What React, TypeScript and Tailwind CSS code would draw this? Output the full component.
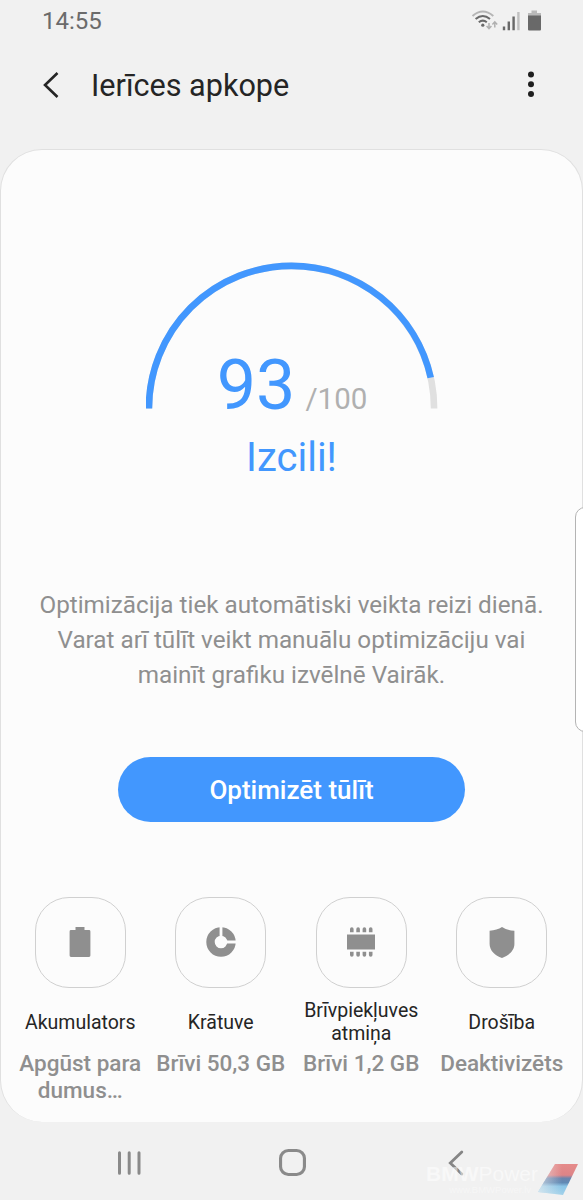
import type { ReactNode } from 'react';

const SCORE = 93;
const RADIUS = 142.6;

const tiles: { label: string; status: string; icon: ReactNode }[] = [
  { label: 'Akumulators', status: 'Apgūst para dumus…', icon: <BatteryIcon /> },
  { label: 'Krātuve', status: 'Brīvi 50,3 GB', icon: <StorageIcon /> },
  { label: 'Brīvpiekļuves atmiņa', status: 'Brīvi 1,2 GB', icon: <MemoryIcon /> },
  { label: 'Drošība', status: 'Deaktivizēts', icon: <ShieldIcon /> },
];

export default function App() {
  return (
    <div className="relative flex h-[1200px] w-[583px] flex-col overflow-hidden bg-[#f1f1f1] font-['Roboto',sans-serif]">
      <StatusBar />

      <header className="flex h-[88px] shrink-0 items-center pr-[46px] pl-[43px]">
        <svg className="h-[26px] w-4 -translate-y-px" viewBox="0 0 16 26" fill="none" stroke="#252525" strokeWidth="2.6">
          <path d="M14.5 1 L2 13 L14.5 25" />
        </svg>
        <h1 className="ml-[32px] text-[30.6px] whitespace-nowrap text-[#252525]">Ierīces apkope</h1>
        <svg className="ml-auto h-[28px] w-[12px] -translate-y-[2px]" viewBox="0 0 12 28" fill="#1f1f1f">
          <circle cx="6" cy="4.4" r="3" />
          <circle cx="6" cy="14.2" r="3" />
          <circle cx="6" cy="24" r="3" />
        </svg>
      </header>

      <main className="mt-[19px] flex h-[973px] shrink-0 flex-col items-center rounded-[42px] border border-b-0 border-[#e0e0e0] bg-[#fcfcfc]">
        <Gauge />
        <p className="mt-[26px] text-[40px] leading-[46px] text-[#4297fe]">Izcili!</p>

        <p className="mt-[107px] text-center text-[24.25px] leading-[35px] whitespace-nowrap text-[#8f8f8f]">
          Optimizācija tiek automātiski veikta reizi dienā.
          <br />
          Varat arī tūlīt veikt manuālu optimizāciju vai
          <br />
          mainīt grafiku izvēlnē Vairāk.
        </p>

        <button
          type="button"
          className="mt-[64px] h-[65px] w-[347px] shrink-0 rounded-full bg-[#4297fe] pt-px text-[26px] font-medium text-white"
        >
          Optimizēt tūlīt
        </button>

        <div className="mt-[75px] grid w-full grid-cols-4 pr-[10px] pl-[9px]">
          {tiles.map((tile) => (
            <div key={tile.label} className="flex flex-col items-center text-center">
              <div className="flex h-[91px] w-[91px] items-center justify-center rounded-[34px] border-[1.5px] border-[#d0d0d0] pb-px">
                {tile.icon}
              </div>
              <div className="mt-[11px] flex h-[46px] w-[124px] items-center justify-center text-[19.5px] leading-[23px] text-[#252525]">
                {tile.label}
              </div>
              <div className="mt-[5px] w-[134px] text-[22.5px] leading-[26.5px] font-medium text-[#8f8f8f]">
                {tile.status}
              </div>
            </div>
          ))}
        </div>
      </main>

      <NavBar />

      {/* Edge panel handle */}
      <div className="absolute top-[507px] -right-3 h-[225px] w-5 rounded-[10px] border border-[#b4b4b4] bg-white" />

      <Watermark />
    </div>
  );
}

function StatusBar() {
  return (
    <div className="flex h-[42px] shrink-0 items-center justify-between pr-[40px] pl-[42px]">
      <span className="text-[24px] leading-[42px] text-[#6b6b6b]">14:55</span>
      <svg className="h-[24px] w-[72px]" viewBox="471 8.5 72 24" fill="none">
        <g strokeWidth="2">
          <path d="M472.5 15.5 Q482.8 6.5 493.3 15.5" stroke="#b5b5b5" />
          <path d="M475.6 18.6 Q482.8 12.4 490 18.6" stroke="#696969" />
          <path d="M478.8 21.8 Q482.8 18.4 486.8 21.8" stroke="#696969" />
        </g>
        <circle cx="482.8" cy="24.7" r="1.6" fill="#696969" />
        <g stroke="#b0b0b0" strokeWidth="1.5">
          <path d="M489 22.5 V28 M486.6 25.6 L489 28.2 L491.4 25.6" />
          <path d="M494.8 27 V21.5 M492.4 23.9 L494.8 21.3 L497.2 23.9" />
        </g>
        <g strokeWidth="2.4">
          <path d="M504 26 V29.7 M508.8 21 V29.7 M513.6 16 V29.7" stroke="#696969" />
          <path d="M518.4 11.5 V29.7" stroke="#c0c0c0" />
        </g>
        <path d="M531.5 10 H537 V12.5 H541 V15.5 H528 V12.5 H531.5 Z" fill="#bababa" />
        <path d="M528 15 H541 V29 Q541 30 540 30 H529 Q528 30 528 29 Z" fill="#696969" />
      </svg>
    </div>
  );
}

function Gauge() {
  const length = Math.PI * RADIUS;
  const filled = (length * SCORE) / 100;
  const arc = `M${145.5 - RADIUS} 147.5 A${RADIUS} ${RADIUS} 0 0 1 ${145.5 + RADIUS} 147.5`;

  return (
    <div className="mt-[111px] grid w-[292px] shrink-0">
      <svg className="col-start-1 row-start-1 h-[148px] w-[292px]" viewBox="0 0 292 148" fill="none" strokeWidth="6.6">
        <path d={arc} stroke="#e0e0e0" />
        <path d={arc} stroke="#4297fe" strokeDasharray={`${filled} ${length}`} />
      </svg>
      <div className="col-start-1 row-start-1 -mb-[14px] flex items-baseline justify-center self-end pl-px leading-[48px]">
        <span className="text-[70px] text-[#4297fe]">{SCORE}</span>
        <span className="ml-[10px] text-[29.5px] text-[#b0b0b0]">/100</span>
      </div>
    </div>
  );
}

function BatteryIcon() {
  return (
    <svg className="h-[30px] w-[22px]" viewBox="0 0 22 30" fill="#8f8f8f">
      <path d="M6.5 0 H15.5 V3 H20 Q21.4 3 21.4 4.4 V28.6 Q21.4 30 20 30 H2 Q.6 30 .6 28.6 V4.4 Q.6 3 2 3 H6.5 Z" />
    </svg>
  );
}

function StorageIcon() {
  return (
    <svg className="h-[30px] w-[30px]" viewBox="0 0 30 30" fill="none">
      <circle cx="15" cy="15" r="10.5" stroke="#8f8f8f" strokeWidth="8.4" />
      <path d="M15 0 V9 M21 15 H30" stroke="#fcfcfc" strokeWidth="2.8" />
    </svg>
  );
}

function MemoryIcon() {
  return (
    <svg className="h-[30px] w-[28px]" viewBox="0 0 28 30" fill="#8f8f8f">
      <rect y="7.5" width="28" height="15" />
      {[3, 9.3, 15.6, 21.9].map((x) => (
        <g key={x}>
          <path d={`M${x} 5.3 V2 Q${x} .3 ${x + 1.8} .3 Q${x + 3.6} .3 ${x + 3.6} 2 V5.3 Z`} />
          <path d={`M${x} 24.7 V28 Q${x} 29.7 ${x + 1.8} 29.7 Q${x + 3.6} 29.7 ${x + 3.6} 28 V24.7 Z`} />
        </g>
      ))}
    </svg>
  );
}

function ShieldIcon() {
  return (
    <svg className="h-[31px] w-[26px]" viewBox="0 0 26 31" fill="#8f8f8f">
      <path d="M13 0 Q18 3.3 25.4 3.8 V17 C25.4 23.5 20 28.5 13 31 C6 28.5 .6 23.5 .6 17 V3.8 Q8 3.3 13 0 Z" />
    </svg>
  );
}

function NavBar() {
  return (
    <nav className="flex h-[78px] items-center justify-between pt-[3px] pr-[119px] pl-[117px]">
      <svg className="h-[26px] w-[24px]" viewBox="0 0 24 26" stroke="#8a8a8a" strokeWidth="3" strokeLinecap="round">
        <path d="M2.5 2.7 V23.3 M12.2 2.7 V23.3 M22 2.7 V23.3" />
      </svg>
      <svg className="mr-[4px] h-[27px] w-[27px]" viewBox="0 0 26 26" fill="none" stroke="#8a8a8a" strokeWidth="3">
        <rect x="1.5" y="1.5" width="23" height="23" rx="7.5" />
      </svg>
      <svg className="h-[26px] w-[16px]" viewBox="0 0 16 26" fill="none" stroke="#858585" strokeWidth="2.8" strokeLinecap="round">
        <path d="M13.8 2 L2.3 13 L13.8 24" />
      </svg>
    </nav>
  );
}

function Watermark() {
  return (
    <div className="absolute right-[4px] bottom-[4px] flex items-end font-['Liberation_Sans',sans-serif] text-white/50">
      <div className="flex flex-col items-end">
        <span className="text-[21px] leading-[20px]">
          <b>BMW</b>Power
        </span>
        <span className="mr-[7px] text-[9.5px] leading-[12px] text-white/40">www.BMWPower.lv</span>
      </div>
      <svg className="h-[34px] w-[41px]" viewBox="0 0 41 34">
        <defs>
          <linearGradient id="stripes" x1="0" y1="0" x2="0" y2="1">
            <stop offset="0" stopColor="#e58b8a" />
            <stop offset=".36" stopColor="#dd8487" />
            <stop offset=".46" stopColor="#6b84ad" />
            <stop offset=".6" stopColor="#6089b4" />
            <stop offset=".72" stopColor="#8bc5e7" />
            <stop offset="1" stopColor="#a3d2ea" />
          </linearGradient>
          <linearGradient id="fade" x1="0" x2="1">
            <stop offset="0" stopColor="#f1f1f1" stopOpacity=".65" />
            <stop offset=".6" stopColor="#f1f1f1" stopOpacity="0" />
          </linearGradient>
        </defs>
        <path d="M17 2 H40 L25 33 L0 30 Z" fill="url(#stripes)" />
        <path d="M17 2 H40 L25 33 L0 30 Z" fill="url(#fade)" />
      </svg>
    </div>
  );
}
